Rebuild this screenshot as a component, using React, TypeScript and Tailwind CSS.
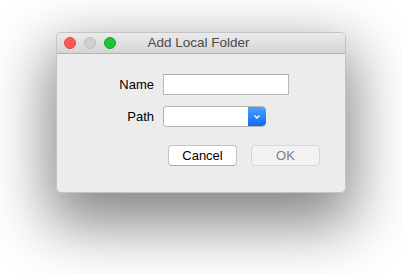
export default function App() {
  return (
    <div
      className="w-[402px] h-[274px] bg-white pt-[32px] pl-[56px]"
      style={{ fontFamily: '"Liberation Sans", Arial, sans-serif' }}
    >
      <div className="w-[290px] h-[161px] rounded-[5px] bg-[#ececec] border border-[#c4c4c4] shadow-[0_24px_60px_8px_rgba(0,0,0,0.48)] overflow-hidden flex flex-col">
        {/* title bar */}
        <div className="relative h-[21px] flex items-center justify-center bg-gradient-to-b from-[#ebebeb] to-[#d5d5d5] border-b border-[#b4b4b4]">
          <div className="absolute left-[7px] top-[4px] flex gap-[8px]">
            <span className="w-[12px] h-[12px] rounded-full bg-[#fc5753] border border-[#df4744]" />
            <span className="w-[12px] h-[12px] rounded-full bg-[#d0d0d0] border border-[#bdbdbd]" />
            <span className="w-[12px] h-[12px] rounded-full bg-[#1ec337] border border-[#16a52a]" />
          </div>
          <span className="text-[13.5px] text-[#4a4a4a] leading-none pr-[5px]">Add Local Folder</span>
        </div>

        {/* body */}
        <div className="flex-1 pt-[20px]">
          <div className="grid grid-cols-[97px_auto] gap-x-[9px] gap-y-[11px] items-center text-[13px] text-black">
            <span className="text-right">Name</span>
            <div className="w-[126px] h-[21px] bg-white border border-[#b9b9b9] border-t-[#a8a8a8]" />
            <span className="text-right">Path</span>
            <div className="w-[103px] h-[21px] flex rounded-[4px] overflow-hidden border border-[#b5b5b5] border-r-0">
              <div className="flex-1 bg-white" />
              <div className="w-[18px] flex items-center justify-center bg-gradient-to-b from-[#4ba2fd] to-[#1069f5] rounded-r-[4px]">
                <svg width="8" height="6" viewBox="0 0 8 6">
                  <path d="M1.5 1.5 L4 4 L6.5 1.5" stroke="white" strokeWidth="1.3" fill="none" />
                </svg>
              </div>
            </div>
          </div>
          <div className="flex gap-[14px] pl-[111px] pt-[18px] text-[13px]">
            <div className="w-[69px] h-[21px] flex items-center justify-center bg-white rounded-[4px] border border-[#c3c3c3] border-b-[#a9a9a9] text-black">
              Cancel
            </div>
            <div className="w-[69px] h-[21px] flex items-center justify-center bg-[#f2f2f2] rounded-[4px] border border-[#d6d6d6] text-[#7d7d7d]">
              OK
            </div>
          </div>
        </div>
      </div>
    </div>
  );
}
